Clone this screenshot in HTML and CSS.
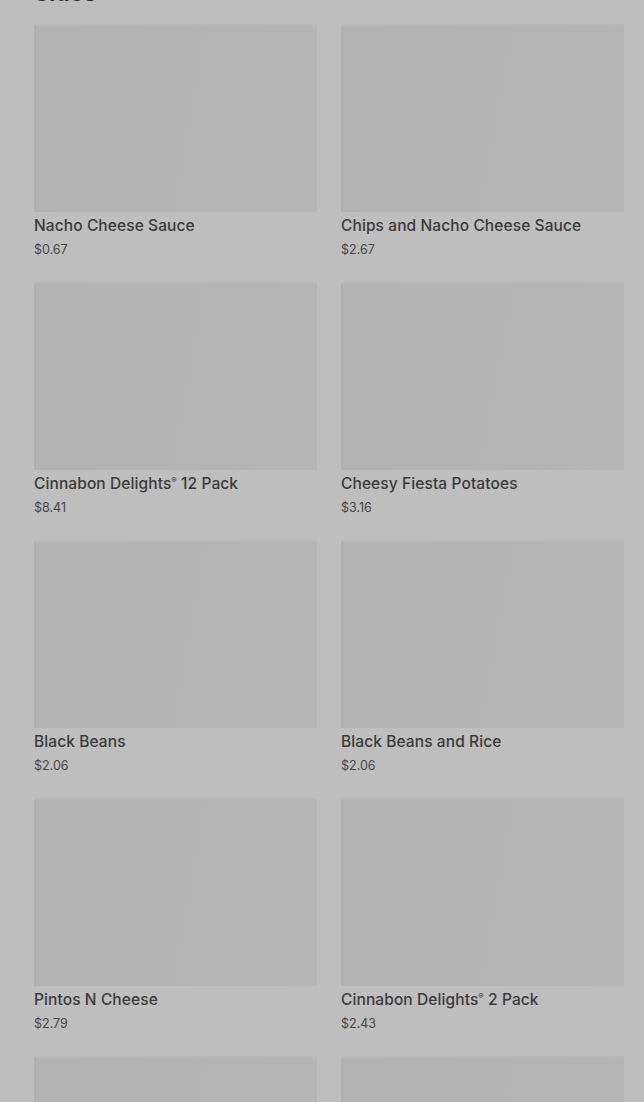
FILE: index.html
```html
<!DOCTYPE html>
<html>
<head>
<meta charset="utf-8">
<link rel="stylesheet" href="styles.css">
</head>
<body>
<main class="page">
  <h2 class="section-title">Sides</h2>
  <div class="grid">
    <div class="card"><div class="thumb"></div><div class="name">Nacho Cheese Sauce</div><div class="price">$0.67</div></div>
    <div class="card"><div class="thumb"></div><div class="name">Chips and Nacho Cheese Sauce</div><div class="price">$2.67</div></div>
    <div class="card"><div class="thumb"></div><div class="name">Cinnabon Delights<sup>®</sup> 12 Pack</div><div class="price">$8.41</div></div>
    <div class="card"><div class="thumb"></div><div class="name">Cheesy Fiesta Potatoes</div><div class="price">$3.16</div></div>
    <div class="card"><div class="thumb"></div><div class="name">Black Beans</div><div class="price">$2.06</div></div>
    <div class="card"><div class="thumb"></div><div class="name">Black Beans and Rice</div><div class="price">$2.06</div></div>
    <div class="card"><div class="thumb"></div><div class="name">Pintos N Cheese</div><div class="price">$2.79</div></div>
    <div class="card"><div class="thumb"></div><div class="name">Cinnabon Delights<sup>®</sup> 2 Pack</div><div class="price">$2.43</div></div>
    <div class="card"><div class="thumb"></div></div>
    <div class="card"><div class="thumb"></div></div>
  </div>
</main>
</body>
</html>
```

FILE: styles.css
```css
html, body {
  margin: 0;
  padding: 0;
  background: #bebebe;
  overflow: hidden;
}
body {
  font-family: Inter, "Noto Sans", sans-serif;
  color: #3b3b3b;
}
.page {
  padding: 0 20px 0 34px;
  margin-top: -21px;
}
.section-title {
  margin: 0;
  font-size: 23px;
  line-height: 28px;
  font-weight: 700;
  color: #333;
  height: 28px;
}
.grid {
  margin-top: 17px;
  display: grid;
  grid-template-columns: 283px 283px;
  column-gap: 24px;
  row-gap: 22px;
}
.card {
  display: flex;
  flex-direction: column;
}
.thumb {
  height: 188px;
  background: linear-gradient(100deg, #b2b2b2 0%, #b3b3b3 50%, #b5b5b5 100%);
  box-shadow: inset 0 2px 0 #b8b8b8, inset 2px 0 0 #afafaf;
}
.name {
  font-size: 15.5px;
  line-height: 24px;
  margin-top: 2px;
  color: #3a3a3a;
  font-weight: 500;
  letter-spacing: 0.1px;
}
.name sup {
  font-size: 8px;
  vertical-align: 6px;
  line-height: 0;
}
.price {
  font-size: 12.5px;
  line-height: 21px;
  padding-top: 1px;
  color: #464646;
}
```
